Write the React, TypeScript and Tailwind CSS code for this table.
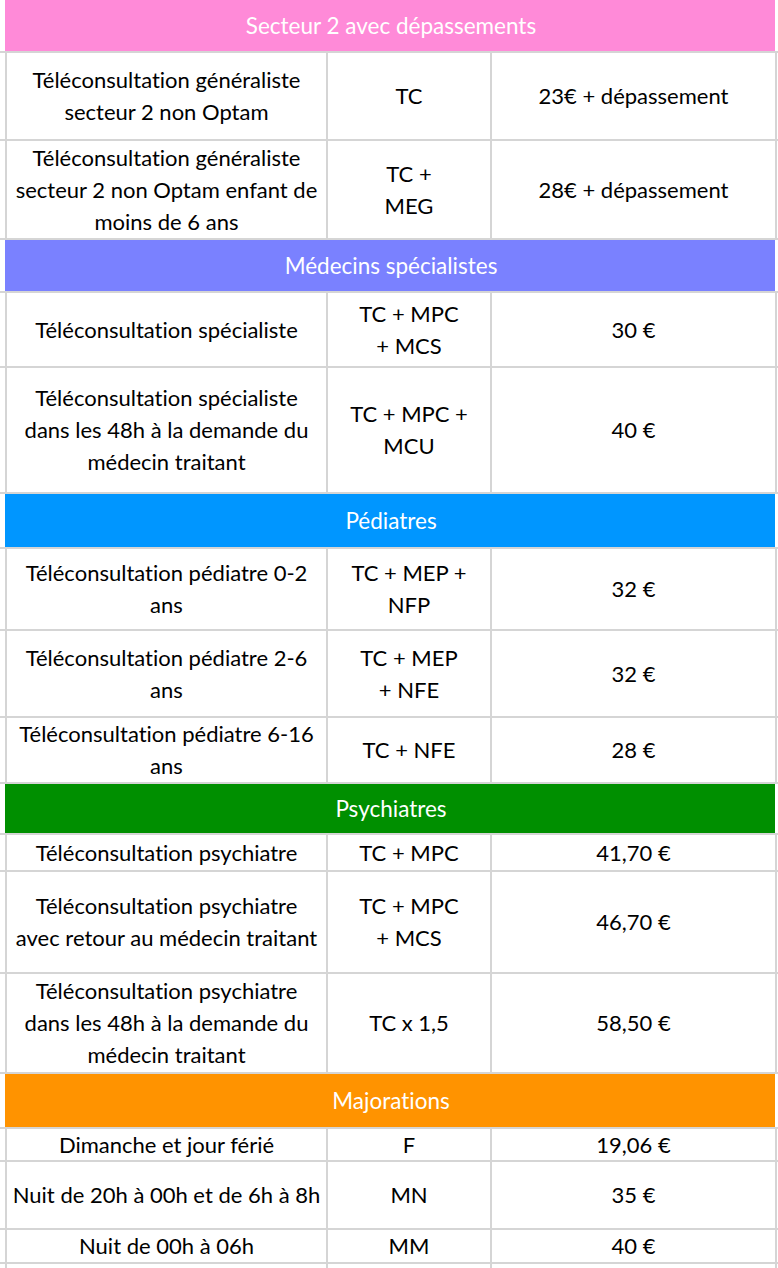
type Row = { acte: string[]; code: string[]; tarif: string; h: string }
type Section = { title: string; bg: string; h: string; rows: Row[] }

const sections: Section[] = [
  {
    title: 'Secteur 2 avec dépassements',
    bg: 'bg-[#ff8ad8]',
    h: 'h-[53px]',
    rows: [
      { acte: ['Téléconsultation généraliste', 'secteur 2 non Optam'], code: ['TC'], tarif: '23€ + dépassement', h: 'h-[88px]' },
      { acte: ['Téléconsultation généraliste', 'secteur 2 non Optam enfant de', 'moins de 6 ans'], code: ['TC +', 'MEG'], tarif: '28€ + dépassement', h: 'h-[99px]' },
    ],
  },
  {
    title: 'Médecins spécialistes',
    bg: 'bg-[#7a81ff]',
    h: 'h-[53px]',
    rows: [
      { acte: ['Téléconsultation spécialiste'], code: ['TC + MPC', '+ MCS'], tarif: '30 €', h: 'h-[75px]' },
      { acte: ['Téléconsultation spécialiste', 'dans les 48h à la demande du', 'médecin traitant'], code: ['TC + MPC +', 'MCU'], tarif: '40 €', h: 'h-[126px]' },
    ],
  },
  {
    title: 'Pédiatres',
    bg: 'bg-[#0096ff]',
    h: 'h-[55px]',
    rows: [
      { acte: ['Téléconsultation pédiatre 0-2', 'ans'], code: ['TC + MEP +', 'NFP'], tarif: '32 €', h: 'h-[82px]' },
      { acte: ['Téléconsultation pédiatre 2-6', 'ans'], code: ['TC + MEP', '+ NFE'], tarif: '32 €', h: 'h-[87px]' },
      { acte: ['Téléconsultation pédiatre 6-16', 'ans'], code: ['TC + NFE'], tarif: '28 €', h: 'h-[66px]' },
    ],
  },
  {
    title: 'Psychiatres',
    bg: 'bg-[#008f00]',
    h: 'h-[51px]',
    rows: [
      { acte: ['Téléconsultation psychiatre'], code: ['TC + MPC'], tarif: '41,70 €', h: 'h-[37px]' },
      { acte: ['Téléconsultation psychiatre', 'avec retour au médecin traitant'], code: ['TC + MPC', '+ MCS'], tarif: '46,70 €', h: 'h-[102px]' },
      { acte: ['Téléconsultation psychiatre', 'dans les 48h à la demande du', 'médecin traitant'], code: ['TC x 1,5'], tarif: '58,50 €', h: 'h-[100px]' },
    ],
  },
  {
    title: 'Majorations',
    bg: 'bg-[#ff9300]',
    h: 'h-[55px]',
    rows: [
      { acte: ['Dimanche et jour férié'], code: ['F'], tarif: '19,06 €', h: 'h-[33px]' },
      { acte: ['Nuit de 20h à 00h et de 6h à 8h'], code: ['MN'], tarif: '35 €', h: 'h-[68px]' },
      { acte: ['Nuit de 00h à 06h'], code: ['MM'], tarif: '40 €', h: 'h-[34px]' },
    ],
  },
]

const line = 'border-[#d5d5d5]'

function Lines({ items }: { items: string[] }) {
  return (
    <div className="flex flex-col items-center">
      {items.map((t, i) => (
        <span key={i} className="whitespace-nowrap">{t}</span>
      ))}
    </div>
  )
}

export default function App() {
  return (
    <div className="w-[778px] h-[1268px] overflow-hidden bg-white text-black text-[22px] leading-[32px] font-['Lato',sans-serif] [font-variant-ligatures:none]">
      {sections.map((s) => (
        <div key={s.title}>
          {/* Section header */}
          <div className={`flex border-b-2 ${line} ${s.h}`}>
            <div className={`w-[7px] shrink-0 border-r-2 ${line}`} />
            <div className={`w-[770px] shrink-0 -ml-[2px] pl-[2px] flex items-center justify-center text-white text-[22.5px] ${s.bg}`}>
              {s.title}
            </div>
          </div>

          {s.rows.map((r, i) => (
            <div key={i} className={`flex border-b-2 ${line} ${r.h}`}>
              <div className={`w-[7px] shrink-0 border-r-2 ${line}`} />
              <div className={`w-[321px] shrink-0 border-r-2 ${line} flex items-center justify-center`}>
                <Lines items={r.acte} />
              </div>
              <div className={`w-[164px] shrink-0 border-r-2 ${line} flex items-center justify-center`}>
                <Lines items={r.code} />
              </div>
              <div className={`w-[285px] shrink-0 border-r-2 ${line} flex items-center justify-center`}>
                {r.tarif}
              </div>
            </div>
          ))}
        </div>
      ))}

      {/* Empty trailing row */}
      <div className="flex h-[40px]">
        <div className={`w-[7px] shrink-0 border-r-2 ${line}`} />
        <div className={`w-[321px] shrink-0 border-r-2 ${line}`} />
        <div className={`w-[164px] shrink-0 border-r-2 ${line}`} />
        <div className={`w-[285px] shrink-0 border-r-2 ${line}`} />
      </div>
    </div>
  )
}
